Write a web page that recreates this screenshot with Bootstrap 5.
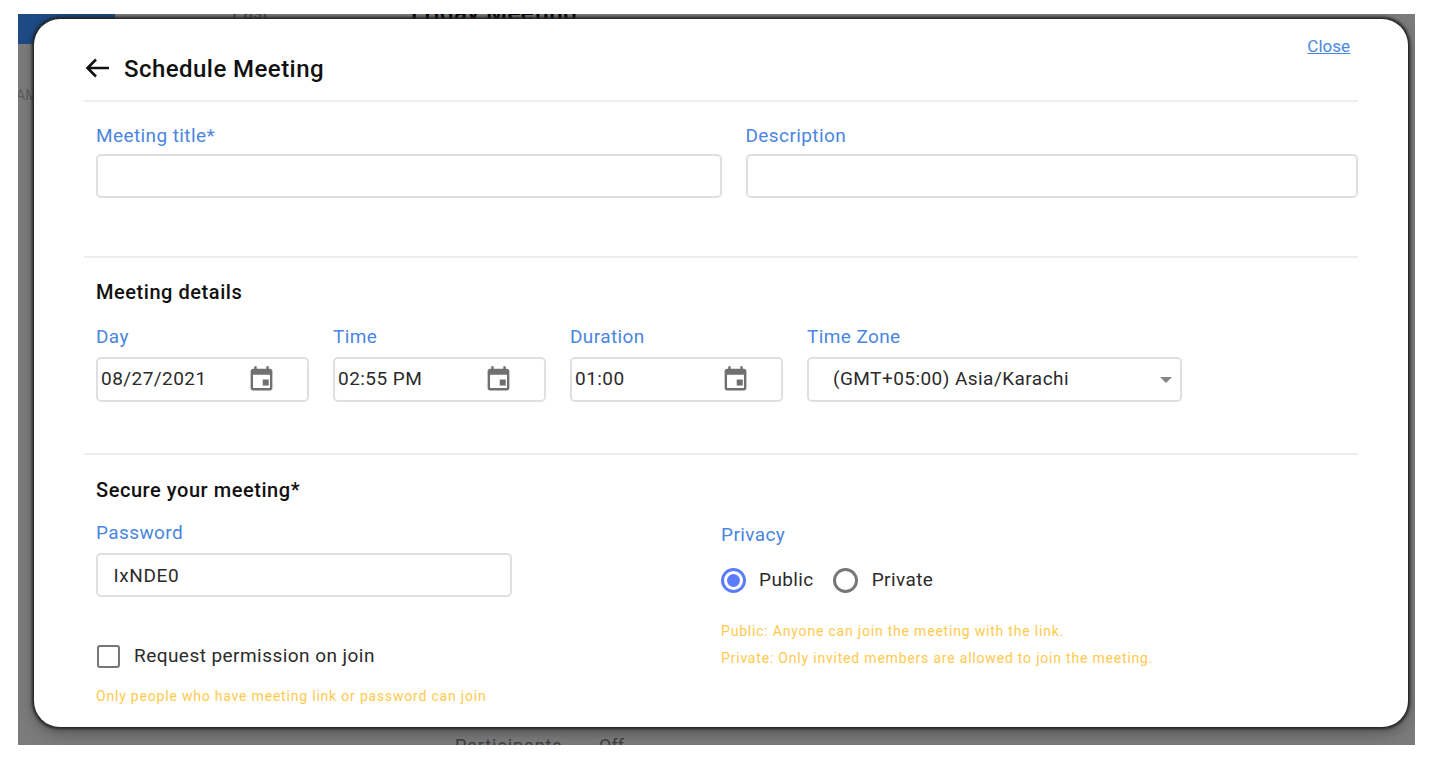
<!DOCTYPE html>
<html lang="en">
<head>
<meta charset="utf-8">
<title>Schedule Meeting</title>
<link href="https://cdn.jsdelivr.net/npm/bootstrap@5.3.0/dist/css/bootstrap.min.css" rel="stylesheet">
<style>
html,body{height:100%;background:#fff;overflow:hidden}
body{font-family:Roboto,"Liberation Sans",sans-serif;color:#222}
.stage{position:relative;margin:14px 0 0 18px;width:1397px;height:731px;background:#7b7b7b;overflow:hidden}
.bg-blue{position:absolute;left:0;top:0;width:97px;height:30px;background:#1d4a85}
.bg-txt{position:absolute;color:#444;white-space:nowrap;line-height:1}
.bg-past{left:214px;top:-10px;font-size:18px}
.bg-fri{left:393px;top:-13px;font-size:24px;font-weight:500;color:#000;letter-spacing:.5px}
.bg-am{left:-2px;top:74px;font-size:14px;color:#5c5c5c}
.bg-part{left:437px;top:723px;font-size:18px;letter-spacing:.9px;color:#3f3f3f}
.bg-off{left:581px;top:723px;font-size:18px;color:#3f3f3f}
.dialog{position:absolute;left:16px;top:5px;width:1374px;height:708px;background:#fff;border-radius:26px;box-shadow:0 0 3px 1.500px #222,0 6px 14px rgba(0,0,0,.3);padding:0 50px;overflow:hidden}
.close-lnk{position:absolute;top:17px;right:58px;font-size:17px;color:#4a86e0;line-height:20px}
.head{height:83px;padding-top:25px;border-bottom:2px solid #eee;gap:14px}
.head h1{font-size:24px;font-weight:500;margin:0;line-height:50px;color:#111;letter-spacing:.45px}
.head svg{display:block;margin-top:-1px}
.sect{border-bottom:2px solid #eee}
.s1{height:156px;padding:22px 0 0 12px}
.s2{height:197px;padding:22px 0 0 12px}
.s3{padding:23px 0 0 12px}
.lbl{display:block;font-size:19px;letter-spacing:.4px;line-height:24px;color:#4a86e0;margin:0 0 8px}
.s1 .lbl{margin-bottom:6px}
.fld{display:block;width:100%;height:44px;border:2px solid #e0e0e0;border-radius:5px;background:#fff;font-size:19px;color:#2b2b2b;padding:0 15.500px}
.fld:focus{outline:0}
.col-a{width:626px}.col-b{width:613px}
.r1{gap:24px}
.sub{font-size:20px;letter-spacing:.55px;font-weight:500;color:#111;line-height:24px;margin:0 0 21px}
.s3 .sub{margin-bottom:19px}
.r2{gap:24.500px}
.date{width:212.500px}
.dbox{height:45px;border:2px solid #e0e0e0;border-radius:5px;padding:0 31px 0 3px;font-size:19px;color:#2b2b2b;letter-spacing:.45px}
.dbox svg{display:block;flex:none}
.zone{width:375px}
.zbox{height:45px;border:2px solid #e0e0e0;border-radius:5px;padding:0 8px 0 24px;font-size:19px;color:#2b2b2b;letter-spacing:.45px}
.caret{width:0;height:0;border-left:6px solid transparent;border-right:6px solid transparent;border-top:6px solid #858585}
.left3{width:625px}
.pwd{width:416px;letter-spacing:.6px}
.hint{color:#ffc94d;font-size:14px;letter-spacing:.8px;line-height:27px;margin:0}
.chk{width:23px;height:23px;border:2px solid #777;border-radius:3px;display:block}
.chk-row{gap:14px;font-size:19px;letter-spacing:.45px;margin:46px 0 0 1px;line-height:26px;color:#2b2b2b}
.only{margin-top:14px}
.priv-wrap{padding-top:45px}
.radio-row{font-size:19px;letter-spacing:.4px;margin:20px 0 25px;height:26px;color:#2b2b2b}
.rad{width:25px;height:25px;border-radius:50%;border:3px solid #777;display:block}
.rad.on{border-color:#5b7cfa;display:flex;align-items:center;justify-content:center}
.rad.on::after{content:"";width:13px;height:13px;border-radius:50%;background:#5b7cfa}
.rad-g1{gap:13px;margin-right:19px}
.rad-g2{gap:14px}
</style>
</head>
<body>
<div class="stage">
  <div class="bg-blue"></div>
  <span class="bg-txt bg-past">Past</span>
  <span class="bg-txt bg-fri">Friday Meeting</span>
  <span class="bg-txt bg-am">AM</span>
  <span class="bg-txt bg-part">Participants</span>
  <span class="bg-txt bg-off">Off</span>
  <div class="dialog">
    <a href="#" class="close-lnk">Close</a>
    <div class="head d-flex align-items-start">
      <svg width="26" height="50" viewBox="0 0 26 50" aria-hidden="true"><path d="M25 25H3M12 16.500 3.500 25l8.500 8.500" fill="none" stroke="#111" stroke-width="2.600"/></svg>
      <h1>Schedule Meeting</h1>
    </div>
    <div class="sect s1 d-flex r1">
      <div class="col-a"><label class="lbl">Meeting title*</label><input class="fld" type="text"></div>
      <div class="col-b"><label class="lbl">Description</label><input class="fld" type="text"></div>
    </div>
    <div class="sect s2">
      <div class="sub">Meeting details</div>
      <div class="d-flex r2">
        <div class="date"><span class="lbl">Day</span><div class="dbox d-flex align-items-center justify-content-between"><span>08/27/2021</span>
          <svg width="29" height="29" viewBox="0 0 24 24" fill="#707070"><path d="M19 3h-1V1h-2v2H8V1H6v2H5C3.900 3 3 3.900 3 5v14c0 1.100.9 2 2 2h14c1.100 0 2-.9 2-2V5c0-1.100-.9-2-2-2zm0 16H5V8h14v11z"/><path d="M13 12h5v5h-5z"/></svg></div></div>
        <div class="date"><span class="lbl">Time</span><div class="dbox d-flex align-items-center justify-content-between"><span>02:55 PM</span>
          <svg width="29" height="29" viewBox="0 0 24 24" fill="#707070"><path d="M19 3h-1V1h-2v2H8V1H6v2H5C3.900 3 3 3.900 3 5v14c0 1.100.9 2 2 2h14c1.100 0 2-.9 2-2V5c0-1.100-.9-2-2-2zm0 16H5V8h14v11z"/><path d="M13 12h5v5h-5z"/></svg></div></div>
        <div class="date"><span class="lbl">Duration</span><div class="dbox d-flex align-items-center justify-content-between"><span>01:00</span>
          <svg width="29" height="29" viewBox="0 0 24 24" fill="#707070"><path d="M19 3h-1V1h-2v2H8V1H6v2H5C3.900 3 3 3.900 3 5v14c0 1.100.9 2 2 2h14c1.100 0 2-.9 2-2V5c0-1.100-.9-2-2-2zm0 16H5V8h14v11z"/><path d="M13 12h5v5h-5z"/></svg></div></div>
        <div class="zone"><span class="lbl">Time Zone</span><div class="zbox d-flex align-items-center justify-content-between"><span>(GMT+05:00) Asia/Karachi</span><span class="caret"></span></div></div>
      </div>
    </div>
    <div class="s3 d-flex">
      <div class="left3">
        <div class="sub">Secure your meeting*</div>
        <span class="lbl">Password</span>
        <input class="fld pwd" type="text" value="IxNDE0">
        <div class="chk-row d-flex align-items-center"><span class="chk"></span><span>Request permission on join</span></div>
        <p class="hint only">Only people who have meeting link or password can join</p>
      </div>
      <div class="priv-wrap">
        <div class="lbl m-0">Privacy</div>
        <div class="radio-row d-flex align-items-center">
          <span class="d-flex align-items-center rad-g1"><span class="rad on"></span><span>Public</span></span>
          <span class="d-flex align-items-center rad-g2"><span class="rad"></span><span>Private</span></span>
        </div>
        <p class="hint">Public: Anyone can join the meeting with the link.</p>
        <p class="hint">Private: Only invited members are allowed to join the meeting.</p>
      </div>
    </div>
  </div>
</div>
<script src="https://cdn.jsdelivr.net/npm/bootstrap@5.3.0/dist/js/bootstrap.bundle.min.js"></script>
</body>
</html>
